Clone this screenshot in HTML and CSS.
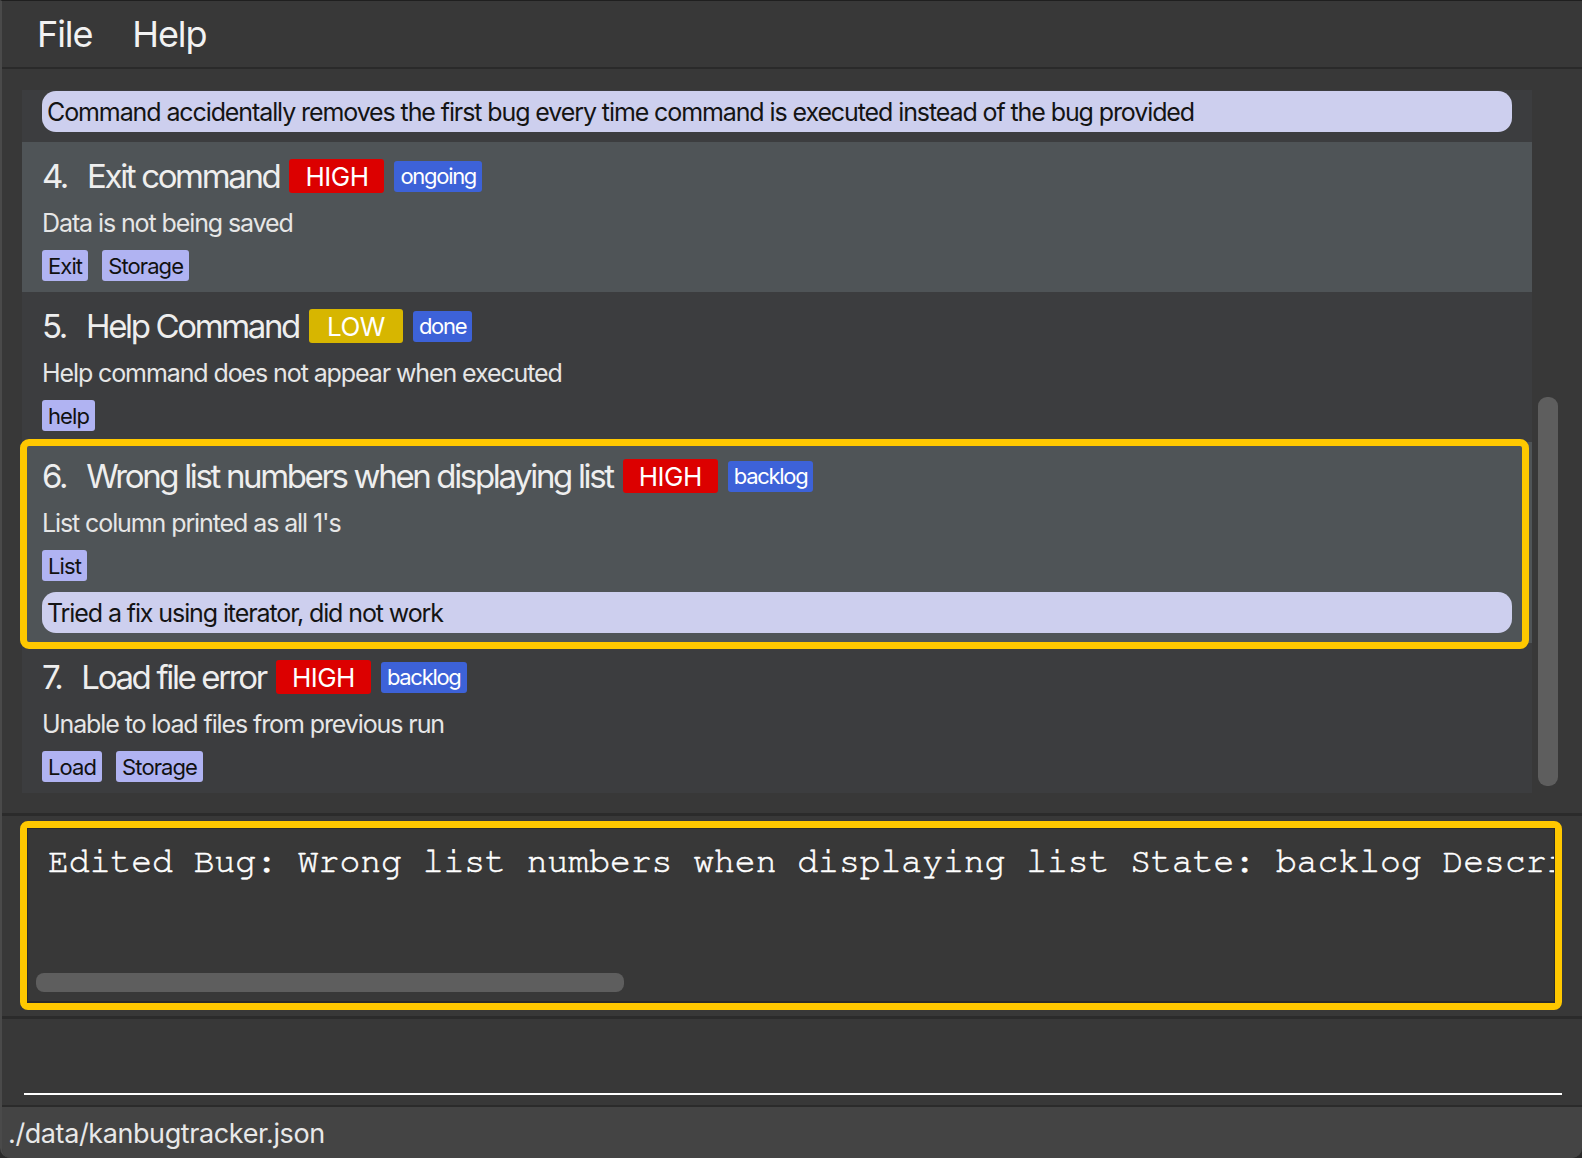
FILE: index.html
```html
<!DOCTYPE html>
<html>
<head>
<meta charset="utf-8">
<title>KanBugTracker</title>
<link rel="stylesheet" href="styles.css">
</head>
<body>
<div class="window">
  <div class="menubar">
    <span class="menu-item">File</span>
    <span class="menu-item">Help</span>
  </div>

  <div class="list-section">
    <div class="list">
      <div class="cell odd partial">
        <div class="pill">Command accidentally removes the first bug every time command is executed instead of the bug provided</div>
      </div>

      <div class="cell even">
        <div class="title-row">
          <span class="num">4.</span><span class="name">Exit command</span>
          <span class="prio high">HIGH</span><span class="state">ongoing</span>
        </div>
        <div class="desc">Data is not being saved</div>
        <div class="tags"><span class="tag">Exit</span><span class="tag">Storage</span></div>
      </div>

      <div class="cell odd">
        <div class="title-row">
          <span class="num">5.</span><span class="name">Help Command</span>
          <span class="prio low">LOW</span><span class="state">done</span>
        </div>
        <div class="desc">Help command does not appear when executed</div>
        <div class="tags"><span class="tag">help</span></div>
      </div>

      <div class="cell even selected">
        <div class="title-row">
          <span class="num">6.</span><span class="name">Wrong list numbers when displaying list</span>
          <span class="prio high">HIGH</span><span class="state">backlog</span>
        </div>
        <div class="desc">List column printed as all 1's</div>
        <div class="tags"><span class="tag">List</span></div>
        <div class="pill note">Tried a fix using iterator, did not work</div>
      </div>

      <div class="cell odd">
        <div class="title-row">
          <span class="num">7.</span><span class="name">Load file error</span>
          <span class="prio high">HIGH</span><span class="state">backlog</span>
        </div>
        <div class="desc">Unable to load files from previous run</div>
        <div class="tags"><span class="tag">Load</span><span class="tag">Storage</span></div>
      </div>
    </div>
    <div class="vscroll"><div class="vthumb"></div></div>
  </div>

  <div class="result-section">
    <div class="result-box">
      <div class="result-area">
        <div class="result-text">Edited Bug: Wrong list numbers when displaying list State: backlog Description: List column printed as all 1's Note: Tried a fix using iterator, did not work Tags: [List]</div>
        <div class="hscroll"><div class="hthumb"></div></div>
      </div>
    </div>
  </div>

  <div class="command-section">
    <div class="command-field"></div>
  </div>

  <div class="statusbar">./data/kanbugtracker.json</div>
</div>
</body>
</html>
```
FILE: styles.css
```css
* {
  box-sizing: border-box;
}

html, body {
  margin: 0;
  padding: 0;
}

body {
  width: 1582px;
  height: 1158px;
  overflow: hidden;
  background: #2a2a2a;
  font-family: Inter, "Noto Sans", sans-serif;
}

.window {
  width: 1582px;
  height: 1158px;
  display: flex;
  flex-direction: column;
  background: #383838;
  border-top: 1px solid #1f1f1f;
  border-left: 2px solid #4a4a4a;
  border-radius: 0 0 10px 10px;
  overflow: hidden;
}

/* ---------- menu bar ---------- */
.menubar {
  flex: none;
  height: 68px;
  display: flex;
  align-items: center;
  gap: 40px;
  padding-left: 35px;
  border-bottom: 2px solid #2a2a2a;
  color: #f2f2f2;
  font-size: 36px;
  letter-spacing: -1.1px;
}

/* ---------- list ---------- */
.list-section {
  flex: none;
  height: 744px;
  display: flex;
  padding: 21px 0 0 20px;
}

.list {
  width: 1510px;
  display: flex;
  flex-direction: column;
}

.cell {
  padding: 14px 20px 11px 20px;
  display: flex;
  flex-direction: column;
  align-items: flex-start;
}

.cell.odd {
  background: #3c3d3f;
}

.cell.even {
  background: #4f5457;
}

.cell.partial {
  padding: 1px 20px 10px 20px;
  align-items: stretch;
}

.cell.selected {
  position: relative;
  padding-bottom: 10px;
}

.cell.selected::after {
  content: "";
  position: absolute;
  top: -3px;
  bottom: -6px;
  left: -2px;
  right: 3px;
  border: 7px solid #ffc800;
  border-radius: 9px;
  pointer-events: none;
}

.pill {
  align-self: stretch;
  height: 41px;
  display: flex;
  align-items: center;
  padding-left: 5px;
  background: #cdcfee;
  border-radius: 14px;
  color: #141414;
  font-size: 25px;
  letter-spacing: -1.1px;
  white-space: nowrap;
}

.pill.note {
  margin-top: 11px;
}

.title-row {
  height: 40px;
  display: flex;
  align-items: center;
  color: #eeeeee;
  font-size: 33px;
  letter-spacing: -2.35px;
  white-space: nowrap;
}

.num {
  margin-right: 20px;
}

.name {
  margin-right: 10px;
}

.prio {
  height: 34px;
  display: flex;
  align-items: center;
  padding: 0 16px;
  margin-right: 10px;
  border-radius: 3px;
  color: #ffffff;
  font-size: 26px;
  letter-spacing: -0.5px;
}

.prio.high {
  background: #dc0000;
}

.prio.low {
  background: #d7b600;
  padding: 0 18px;
}

.state {
  height: 31px;
  display: flex;
  align-items: center;
  padding: 0 6px;
  border-radius: 3px;
  background: #3d62d8;
  color: #ffffff;
  font-size: 22px;
  letter-spacing: -1.3px;
}

.desc {
  height: 30px;
  margin-top: 12px;
  display: flex;
  align-items: center;
  color: #e6e6e6;
  font-size: 25px;
  letter-spacing: -1.1px;
  white-space: nowrap;
}

.tags {
  margin-top: 12px;
  display: flex;
  gap: 14px;
}

.tag {
  height: 31px;
  display: flex;
  align-items: center;
  padding: 0 6px;
  border-radius: 3px;
  background: #b0b3f2;
  color: #111111;
  font-size: 22px;
  letter-spacing: -0.9px;
}

.vscroll {
  width: 20px;
  margin-left: 6px;
  padding-top: 307px;
}

.vthumb {
  width: 20px;
  height: 389px;
  background: #5e5e5e;
  border-radius: 9px;
}

/* ---------- result display ---------- */
.result-section {
  flex: none;
  height: 203px;
  border-top: 3px solid #2b2b2b;
  padding: 5px 20px 0 18px;
}

.result-box {
  height: 189px;
  border: 7px solid #ffc800;
  border-radius: 8px;
  background: #383838;
}

.result-area {
  height: 100%;
  border: 1px solid #2a2a2a;
  border-width: 1px 1px 2px 1px;
  display: flex;
  flex-direction: column;
  overflow: hidden;
}

.result-text {
  flex: 1;
  padding: 13px 0 0 20px;
  font-family: "Nimbus Mono PS", "Nimbus Mono L", FreeMono, "Courier New", "Liberation Mono", monospace;
  font-size: 34.7px;
  line-height: 40px;
  color: #ffffff;
  -webkit-text-stroke: 0.5px #ffffff;
  white-space: nowrap;
  overflow: hidden;
}

.hscroll {
  height: 28px;
  padding: 0 0 9px 8px;
}

.hthumb {
  width: 588px;
  height: 19px;
  background: #5e5e5e;
  border-radius: 8px;
}

/* ---------- command box ---------- */
.command-section {
  flex: none;
  height: 89px;
  border-top: 3px solid #2b2b2b;
  padding: 0 20px 0 22px;
}

.command-field {
  height: 76px;
  border-bottom: 2px solid #ffffff;
}

/* ---------- status bar ---------- */
.statusbar {
  flex: 1;
  display: flex;
  align-items: center;
  padding: 2px 0 0 6px;
  background: #444444;
  border-top: 2px solid #2b2b2b;
  color: #e8e8e8;
  font-size: 27px;
  letter-spacing: -0.4px;
  white-space: nowrap;
}
```
